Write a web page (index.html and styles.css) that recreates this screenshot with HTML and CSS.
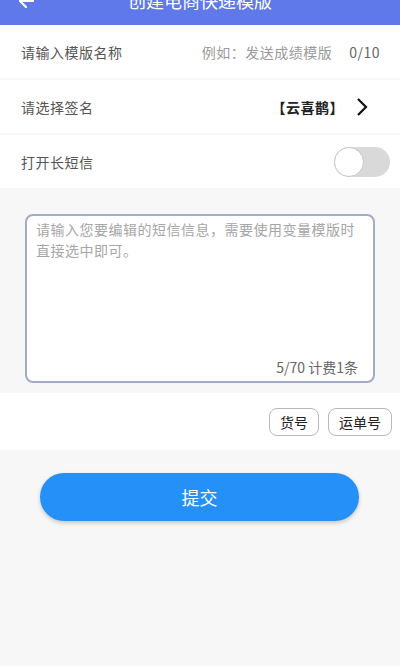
FILE: index.html
```html
<!DOCTYPE html>
<html lang="zh-CN">
<head>
    <meta charset="UTF-8">
    <meta name="viewport" content="width=device-width, initial-scale=1.0">
    <title>创建电商快递模版</title>
    <link rel="stylesheet" href="styles.css">
</head>
<body>
    <div class="header">
        <div class="header-inner">
            <span class="back">
                <svg width="18" height="18" viewBox="0 0 18 18"><path d="M16 9H3M9 3L3 9l6 6" fill="none" stroke="#fff" stroke-width="2.2" stroke-linecap="round" stroke-linejoin="round"/></svg>
            </span>
            <div class="title">创建电商快递模版</div>
        </div>
    </div>

    <div class="row">
        <span class="label">请输入模版名称</span>
        <span class="placeholder">例如：发送成绩模版</span>
        <span class="count">0/10</span>
    </div>
    <div class="row">
        <span class="label">请选择签名</span>
        <span class="sign">【云喜鹊】</span>
        <svg class="arrow" width="12" height="20" viewBox="0 0 12 20"><path d="M2 2l8 8-8 8" fill="none" stroke="#111" stroke-width="2.2"/></svg>
    </div>
    <div class="row row-last">
        <span class="label">打开长短信</span>
        <span class="switch"><span class="knob"></span></span>
    </div>

    <div class="editor-area">
        <div class="editor">
            <div class="hint">请输入您要编辑的短信信息，需要使用变量模版时直接选中即可。</div>
            <div class="counter">5/70 计费1条</div>
        </div>
    </div>

    <div class="tags">
        <button class="tag">货号</button>
        <button class="tag">运单号</button>
    </div>

    <div class="submit-wrap">
        <button class="submit">提交</button>
    </div>
</body>
</html>
```

FILE: styles.css
```css
body {
    margin: 0;
    font-family: "Noto Sans CJK SC", "Liberation Sans", sans-serif;
    background-color: #f7f7f7;
    height: 666px;
    overflow: hidden;
}
.header {
    background: #6079ea;
    height: 25px;
    overflow: hidden;
}
.header-inner {
    margin-top: -22px;
    height: 44px;
    display: flex;
    align-items: center;
    justify-content: center;
    position: relative;
}
.back {
    position: absolute;
    left: 17px;
    top: 13px;
}
.title {
    color: #fff;
    font-size: 18px;
}
.row {
    background: #fff;
    height: 53px;
    display: flex;
    align-items: center;
    padding: 0 20px 0 21px;
    margin-bottom: 2px;
    font-size: 14px;
    letter-spacing: 0.5px;
}
.row-last {
    margin-bottom: 0;
}
.label {
    color: #555;
    flex: 1;
}
.placeholder {
    color: #9a9a9a;
}
.count {
    color: #666;
    margin-left: 17px;
}
.sign {
    color: #222;
    font-weight: bold;
}
.arrow {
    margin-left: 12px;
    margin-right: 12px;
}
.switch {
    width: 56px;
    height: 30px;
    border-radius: 15px;
    background: #d9d9da;
    margin-right: -10px;
    display: flex;
    align-items: center;
}
.knob {
    width: 28px;
    height: 28px;
    border-radius: 50%;
    background: #fff;
    border: 1px solid #c8c8c8;
}
.editor-area {
    padding: 26px 25px 10px 25px;
    height: 169px;
}
.editor {
    height: 169px;
    background: #fff;
    border: 2px solid #a3abc9;
    border-radius: 8px;
    padding: 3px 14px 0 9px;
    box-sizing: border-box;
    display: flex;
    flex-direction: column;
}
.hint {
    color: #a6a6a6;
    font-size: 14px;
    line-height: 21px;
    letter-spacing: 0.5px;
    flex: 1;
}
.counter {
    text-align: right;
    color: #666;
    font-size: 14px;
    padding-bottom: 4px;
    margin-right: 1px;
}
.tags {
    background: #fff;
    height: 57px;
    display: flex;
    justify-content: flex-end;
    align-items: center;
    gap: 9px;
    padding-right: 8px;
}
.tag {
    font-family: inherit;
    font-size: 14px;
    color: #222;
    background: #fff;
    border: 1px solid #b8b8b8;
    border-radius: 8px;
    height: 28px;
    padding: 0 10px;
}
.submit-wrap {
    padding: 23px 41px 0 40px;
}
.submit {
    width: 100%;
    height: 48px;
    border: none;
    border-radius: 24px;
    background: #2590f8;
    color: #fff;
    font-family: inherit;
    font-size: 18px;
    box-shadow: 0 2px 4px rgba(0, 0, 0, 0.2);
}
```
